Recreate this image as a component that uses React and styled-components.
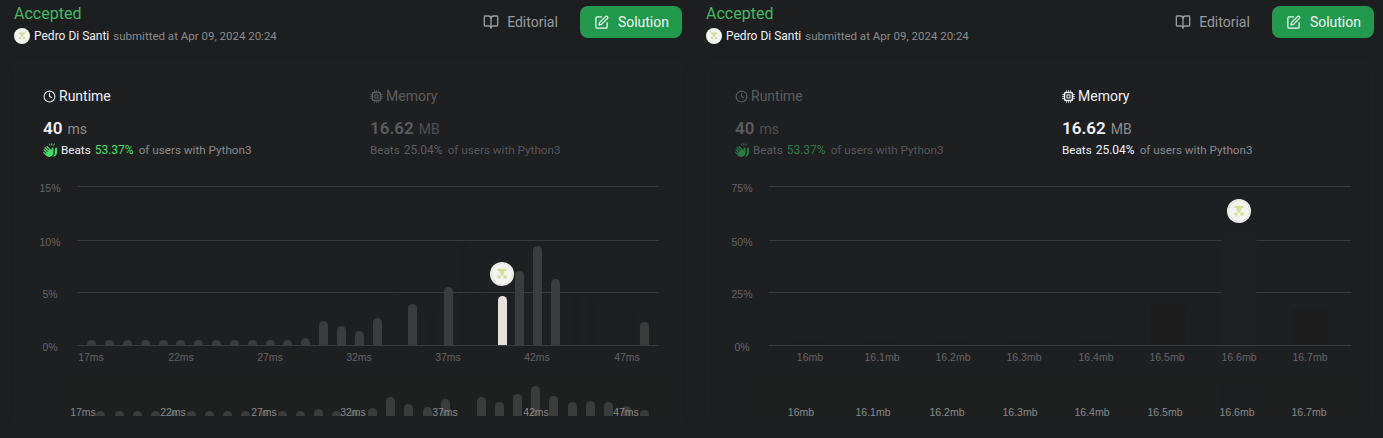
import React from 'react'
import styled, { createGlobalStyle } from 'styled-components'
import { BookOpen, Clock, SquarePen } from 'lucide-react'
import { FaHandsClapping } from 'react-icons/fa6'

const GlobalStyle = createGlobalStyle`
  html, body { margin: 0; background: #1c1e20; }
  body { font-family: Roboto, "Noto Sans", sans-serif; overflow: hidden; }
`

const Page = styled.div`
  display: flex;
  width: 1383px;
  height: 438px;
  background: #1c1e20;
`

const Pane = styled.section`
  width: 692px;
  flex: none;
  padding: 0 10px 0 14px;
  box-sizing: border-box;
`

const Header = styled.header`
  display: flex;
  justify-content: space-between;
  align-items: flex-start;
  height: 60px;
`

const Status = styled.div`
  color: #3fbb62;
  font-size: 16px;
  line-height: 24px;
  margin-top: 2px;
`

const Submitter = styled.div`
  display: flex;
  align-items: center;
  gap: 4px;
  font-size: 11.5px;
  line-height: 16px;
  margin-top: 2px;
  color: #8b8c8d;
  white-space: nowrap;
`

const Name = styled.span`
  font-size: 12px;
  color: #eff1f6;
`

const Actions = styled.div`
  display: flex;
  align-items: center;
  gap: 8px;
  margin-top: 6px;
`

const ActionButton = styled.div`
  display: flex;
  align-items: center;
  gap: ${(p) => (p.$primary ? '9px' : '8px')};
  height: 32px;
  padding: 0 ${(p) => (p.$primary ? '13px' : '14px')} 0 14px;
  border-radius: 8px;
  font-size: 14px;
  background: ${(p) => (p.$primary ? '#219a4e' : 'transparent')};
  color: ${(p) => (p.$primary ? '#f2f6f3' : '#9a9c9f')};
`

const Card = styled.div`
  height: 370px;
  border: 1px solid #1f2022;
  border-radius: 8px;
  box-sizing: border-box;
  background: #1e1f21;
  overflow: hidden;
`

const StatsRow = styled.div`
  display: grid;
  grid-template-columns: 327px 1fr;
  height: 109px;
  padding: 25px 0 0 28px;
  box-sizing: border-box;
`

const Stat = styled.div`
  color: ${(p) => (p.$active ? '#eff1f6' : '#5c5d5e')};
`

const StatTitle = styled.div`
  display: flex;
  align-items: center;
  gap: 3px;
  font-size: 14px;
  line-height: 20px;
`

const StatValue = styled.div`
  display: flex;
  align-items: baseline;
  gap: 5px;
  margin-top: 11px;
  font-size: 17px;
  line-height: 22px;
  font-weight: 600;
`

const Unit = styled.span`
  font-size: 14px;
  font-weight: 400;
  color: ${(p) => (p.$active ? '#8b8c8d' : '#4f5051')};
`

const Beats = styled.div`
  display: flex;
  align-items: center;
  gap: 4px;
  margin-top: 1px;
  font-size: 11.7px;
  line-height: 18px;
  white-space: nowrap;
  color: ${(p) => (p.$active ? '#8b8c8d' : '#56575a')};
`

const BeatsLabel = styled.span`
  color: ${(p) => (p.$active ? '#eff1f6' : '#5c5d5e')};
`

const Percent = styled.span`
  font-size: 12px;
  margin-right: 1px;
  color: ${(p) => p.$color};
`

const ChartSvg = styled.svg`
  display: block;
  width: 668px;
  height: 260px;
  margin-left: -1px;
`

const AxisText = styled.text`
  font-family: "Liberation Sans", Arial, sans-serif;
  font-size: 10.5px;
  fill: ${(p) => (p.$mini ? '#8a8a8a' : '#666')};
  text-anchor: middle;
`

// small identicon, same thing is used for the user pic and the chart marker
function Identicon({ x = 0, y = 0, size = 16, ring }) {
  const u = size / 16
  const cells = [[5, 4.5, 6, 1.5], [6.5, 6, 3, 1.5], [7, 7.5, 2, 1.5], [5, 9, 2, 2], [9, 9, 2, 2]]
  return (
    <g transform={`translate(${x} ${y})`}>
      <circle cx={8 * u} cy={8 * u} r={8 * u} fill="#f3f3ef" />
      {ring && <circle cx={8 * u} cy={8 * u} r={6.9 * u} fill="none" stroke="#c9cac2" strokeWidth="0.7" strokeDasharray="1.5 1" />}
      {cells.map((c, i) => (
        <rect key={i} x={c[0] * u} y={c[1] * u} width={c[2] * u} height={c[3] * u} fill="#d3dd95" />
      ))}
    </g>
  )
}

const UserPic = () => (
  <svg width="16" height="16" viewBox="0 0 16 16"><Identicon /></svg>
)

// chip icon, filled body with ticks round it
const ChipIcon = () => (
  <svg width="13" height="13" viewBox="0 0 13 13" fill="none" stroke="currentColor">
    <rect x="2.5" y="2.5" width="8" height="8" rx="1.5" strokeWidth="1.6" />
    <rect x="5" y="5" width="3" height="3" strokeWidth="1" />
    <path d="M4.5 0v13M6.5 0v13M8.5 0v13M0 4.5h13M0 6.5h13M0 8.5h13" strokeWidth="0.7" strokeDasharray="2.2 8.6" />
  </svg>
)

const barPath = (cx, top, bottom, w, r) => {
  const x = cx - w / 2
  return `M${x} ${bottom}V${top + r}a${r} ${r} 0 0 1 ${r} ${-r}h${w - 2 * r}a${r} ${r} 0 0 1 ${r} ${r}V${bottom}z`
}

const GRID_Y = [186, 240, 292, 345]

const barFill = {
  me: '#e4e1dc',
  dim: 'rgba(18, 26, 26, 0.14)',
  solid: '#1c1d1c',
  faint: '#1f2021',
  undefined: '#3b3d3c',
}

function Chart({ yLabels, xLabels, miniLabels, bars, miniBars, barWidth, radius, marker }) {
  return (
    <ChartSvg viewBox="14 170 668 260">
      <rect x="59.5" y="377" width="608.5" height="39" fill="#1e2020" />
      {GRID_Y.map((y) => (
        <line key={y} x1="77" x2="659" y1={y + 0.5} y2={y + 0.5} stroke="#3a3b3c" />
      ))}
      {yLabels.map((t, i) => (
        <AxisText key={t} x="50" y={GRID_Y[i] + 6}>{t}</AxisText>
      ))}
      {bars.map(([x, top, kind], i) => (
        <path key={i} d={barPath(x, top, 345, barWidth, radius)} fill={barFill[kind]} />
      ))}
      {xLabels.map(([x, t]) => (
        <AxisText key={t} x={x} y="361">{t}</AxisText>
      ))}
      {miniBars.map(([x, top, kind], i) => (
        <path key={i} d={barPath(x, top, 416, barWidth, radius)} fill={barFill[kind]} />
      ))}
      {miniLabels.map(([x, t]) => (
        <AxisText key={t} $mini x={x} y="416">{t}</AxisText>
      ))}
      <Identicon x={marker[0] - 12} y={marker[1] - 12} size={24} ring />
    </ChartSvg>
  )
}

const runtimeChart = {
  yLabels: ['15%', '10%', '5%', '0%'],
  barWidth: 9,
  radius: 4.5,
  marker: [502, 274],
  xLabels: [[91, '17ms'], [181, '22ms'], [270, '27ms'], [359, '32ms'], [448, '37ms'], [537, '42ms'], [627, '47ms']],
  miniLabels: [[83, '17ms'], [173, '22ms'], [264, '27ms'], [353, '32ms'], [445, '37ms'], [536, '42ms'], [626, '47ms']],
  bars: [
    [91.5, 340], [109.5, 340], [127.5, 340], [145.5, 340], [163.5, 340], [180.5, 340], [198.5, 340],
    [216.5, 340], [234.5, 340], [252.5, 340], [270.5, 340], [287.5, 340], [305.5, 338], [323.5, 321],
    [341.5, 326], [359.5, 331], [377.5, 318], [395.5, 280, 'dim'], [412.5, 304], [430.5, 313, 'dim'],
    [448.5, 287], [466.5, 240, 'dim'], [484.5, 280, 'dim'], [502.5, 296, 'me'], [519.5, 271], [537.5, 246],
    [555.5, 279], [575.5, 298, 'dim'], [593.5, 298, 'dim'], [611.5, 298, 'dim'], [629.5, 310, 'dim'], [644.5, 322],
  ],
  miniBars: [
    [100.5, 411], [119.5, 411], [137.5, 411], [155.5, 411], [173.5, 411], [191.5, 411], [209.5, 411],
    [227.5, 411], [245.5, 411], [263.5, 411], [282.5, 411], [300.5, 411], [318.5, 409], [336.5, 411],
    [354.5, 411], [372.5, 408], [390.5, 397], [408.5, 404], [427.5, 407], [445.5, 399], [481.5, 397],
    [499.5, 402], [517.5, 394], [535.5, 386], [553.5, 396], [572.5, 402], [590.5, 401], [608.5, 402],
    [626.5, 406], [644.5, 410],
  ],
}

const memoryChart = {
  yLabels: ['75%', '50%', '25%', '0%'],
  barWidth: 35,
  radius: 1,
  marker: [547, 211],
  xLabels: [[118, '16mb'], [190, '16.1mb'], [261, '16.2mb'], [332, '16.3mb'], [404, '16.4mb'], [475, '16.5mb'], [547, '16.6mb'], [618, '16.7mb']],
  miniLabels: [[109, '16mb'], [181, '16.1mb'], [255, '16.2mb'], [328, '16.3mb'], [400, '16.4mb'], [473, '16.5mb'], [545, '16.6mb'], [617, '16.7mb']],
  bars: [
    [118, 340, 'dim'], [190, 340, 'dim'], [261, 340, 'dim'], [332, 340, 'dim'], [404, 340, 'dim'],
    [475, 304, 'solid'], [547, 233, 'faint'], [618, 309, 'solid'],
  ],
  miniBars: [[547, 383, 'dim']],
}

function Stats({ active }) {
  const runtime = active === 'runtime'
  const memory = active === 'memory'
  return (
    <StatsRow>
      <Stat $active={runtime}>
        <StatTitle><Clock size={13} />Runtime</StatTitle>
        <StatValue>40 <Unit $active={runtime}>ms</Unit></StatValue>
        <Beats $active={runtime}>
          <FaHandsClapping size={14} color={runtime ? '#44df6b' : '#2a7a45'} />
          <BeatsLabel $active={runtime}>Beats</BeatsLabel>
          <Percent $color={runtime ? '#44df6b' : '#2f7a48'}>53.37%</Percent>
          <span>of users with Python3</span>
        </Beats>
      </Stat>
      <Stat $active={memory}>
        <StatTitle><ChipIcon />Memory</StatTitle>
        <StatValue>16.62 <Unit $active={memory}>MB</Unit></StatValue>
        <Beats $active={memory}>
          <BeatsLabel $active={memory}>Beats</BeatsLabel>
          <Percent $color={memory ? '#eff1f6' : '#5c5d5e'}>25.04%</Percent>
          <span>of users with Python3</span>
        </Beats>
      </Stat>
    </StatsRow>
  )
}

function Result({ active, chart }) {
  return (
    <Pane>
      <Header>
        <div>
          <Status>Accepted</Status>
          <Submitter>
            <UserPic />
            <Name>Pedro Di Santi</Name>
            <span>submitted at Apr 09, 2024 20:24</span>
          </Submitter>
        </div>
        <Actions>
          <ActionButton><BookOpen size={16} />Editorial</ActionButton>
          <ActionButton $primary><SquarePen size={15} />Solution</ActionButton>
        </Actions>
      </Header>
      <Card>
        <Stats active={active} />
        <Chart {...chart} />
      </Card>
    </Pane>
  )
}

export default function App() {
  return (
    <Page>
      <GlobalStyle />
      <Result active="runtime" chart={runtimeChart} />
      <Result active="memory" chart={memoryChart} />
    </Page>
  )
}
